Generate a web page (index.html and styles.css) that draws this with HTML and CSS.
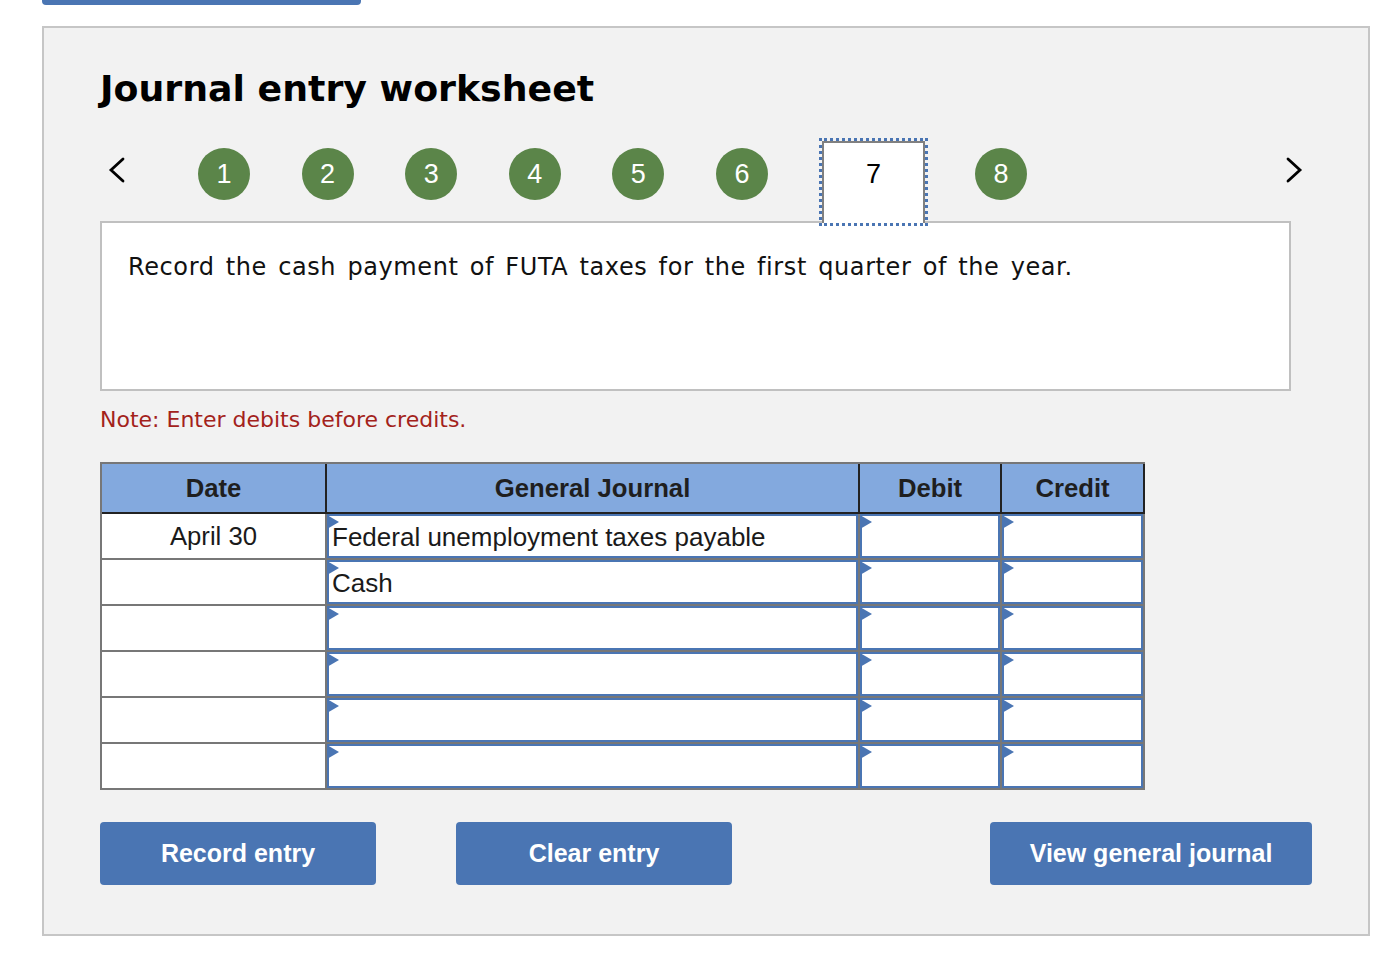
FILE: index.html
```html
<!DOCTYPE html>
<html lang="en">
<head>
    <meta charset="UTF-8">
    <meta name="viewport" content="width=device-width, initial-scale=1.0">
    <title>Journal entry worksheet</title>
    <link rel="stylesheet" href="styles.css">
</head>
<body>
    <!-- bottom of the previous button, cut off by the scroll -->
    <div class="topbar"></div>

    <div class="panel">
        <h1 class="title">Journal entry worksheet</h1>

        <!-- step navigation -->
        <div class="steps">
            <span class="arrow arrow-prev">
                <svg width="17" height="26" viewBox="0 0 17 26"><path d="M15 2 L3 13 L15 24" /></svg>
            </span>
            <span class="step step-first">1</span>
            <span class="step">2</span>
            <span class="step">3</span>
            <span class="step">4</span>
            <span class="step">5</span>
            <span class="step step-before">6</span>
            <span class="step-current">7</span>
            <span class="step step-last">8</span>
            <span class="arrow arrow-next">
                <svg width="17" height="26" viewBox="0 0 17 26"><path d="M2 2 L14 13 L2 24" /></svg>
            </span>
        </div>

        <div class="prompt">Record the cash payment of FUTA taxes for the first quarter of the year.</div>

        <p class="note">Note: Enter debits before credits.</p>

        <!-- journal table -->
        <div class="journal">
            <div class="head">Date</div>
            <div class="head">General Journal</div>
            <div class="head">Debit</div>
            <div class="head">Credit</div>

            <div class="cell date">April 30</div>
            <div class="cell"><div class="field">Federal unemployment taxes payable</div></div>
            <div class="cell"><div class="field"></div></div>
            <div class="cell"><div class="field"></div></div>

            <div class="cell date"></div>
            <div class="cell"><div class="field">Cash</div></div>
            <div class="cell"><div class="field"></div></div>
            <div class="cell"><div class="field"></div></div>

            <div class="cell date"></div>
            <div class="cell"><div class="field"></div></div>
            <div class="cell"><div class="field"></div></div>
            <div class="cell"><div class="field"></div></div>

            <div class="cell date"></div>
            <div class="cell"><div class="field"></div></div>
            <div class="cell"><div class="field"></div></div>
            <div class="cell"><div class="field"></div></div>

            <div class="cell date"></div>
            <div class="cell"><div class="field"></div></div>
            <div class="cell"><div class="field"></div></div>
            <div class="cell"><div class="field"></div></div>

            <div class="cell date"></div>
            <div class="cell"><div class="field"></div></div>
            <div class="cell"><div class="field"></div></div>
            <div class="cell"><div class="field"></div></div>
        </div>

        <div class="actions">
            <button class="btn btn-record">Record entry</button>
            <button class="btn btn-clear">Clear entry</button>
            <button class="btn btn-view">View general journal</button>
        </div>
    </div>
</body>
</html>
```

FILE: styles.css
```css
body {
    margin: 0;
    background-color: #ffffff;
    font-family: 'DejaVu Sans', Verdana, sans-serif;
    color: #111111;
}

.topbar {
    width: 319px;
    height: 5px;
    margin-left: 42px;
    background-color: #4a75b3;
    border-radius: 0 0 4px 4px;
}

.panel {
    box-sizing: border-box;
    width: 1328px;
    height: 910px;
    margin: 21px 0 0 42px;
    padding: 40px 0 0 56px;
    border: 2px solid #c6c6c6;
    background-color: #f2f2f2;
}

.title {
    margin: 0;
    font-family: 'DejaVu Sans', Verdana, sans-serif;
    font-size: 36.3px;
    font-weight: 700;
    line-height: 42px;
    color: #000000;
}

/* Navegacion de pasos */
.steps {
    display: flex;
    align-items: flex-start;
    width: 1203px;
    height: 82px;
    margin-top: 31px;
}

.arrow {
    display: block;
    width: 17px;
    height: 26px;
    margin-top: 16px;
}

.arrow svg {
    display: block;
    fill: none;
    stroke: #000000;
    stroke-width: 2.8;
    stroke-linecap: round;
    stroke-linejoin: miter;
}

.arrow-prev {
    margin-left: 8px;
}

.arrow-next {
    margin-left: auto;
}

.step {
    width: 52px;
    height: 52px;
    margin-top: 7px;
    margin-right: 51.6px;
    border-radius: 50%;
    background-color: #5b8549;
    color: #ffffff;
    font-family: 'Liberation Sans', Arial, sans-serif;
    font-size: 27px;
    line-height: 52px;
    text-align: center;
}

.step-first {
    margin-left: 73px;
}

.step-before {
    margin-right: 54px;
}

.step-last {
    margin-right: 0;
}

.step-current {
    position: relative;
    z-index: 1;
    box-sizing: border-box;
    width: 103px;
    height: 82px;
    margin-right: 50px;
    padding-top: 15px;
    border: 2px solid #808080;
    border-bottom: 0;
    outline: 3px dotted #4a75b3;
    background-color: #ffffff;
    color: #000000;
    font-family: 'Liberation Sans', Arial, sans-serif;
    font-size: 27px;
    line-height: 32px;
    text-align: center;
}

.prompt {
    box-sizing: border-box;
    width: 1191px;
    height: 170px;
    margin-top: -2px;
    padding: 29px 26px 0;
    border: 2px solid #c0c0c0;
    background-color: #ffffff;
    font-size: 24px;
    letter-spacing: 0.6px;
    word-spacing: 3px;
    line-height: 30px;
    color: #111111;
}

.note {
    margin: 16px 0 0;
    font-size: 22px;
    line-height: 26px;
    color: #a3221b;
}

/* Tabla del diario */
.journal {
    display: grid;
    grid-template-columns: 225px 533px 142px 143px;
    box-sizing: border-box;
    width: 1045px;
    margin-top: 29px;
    border-top: 2px solid #777777;
    border-left: 2px solid #777777;
    font-family: 'Liberation Sans', Arial, sans-serif;
    font-size: 25.7px;
    color: #1a1a1a;
}

.head {
    box-sizing: border-box;
    height: 50px;
    border-right: 2px solid #222222;
    border-bottom: 2px solid #222222;
    background-color: #83a9de;
    font-weight: 700;
    line-height: 48px;
    text-align: center;
    color: #1f1f1f;
}

.cell {
    box-sizing: border-box;
    height: 46px;
    border-right: 2px solid #777777;
    border-bottom: 2px solid #777777;
    background-color: #ffffff;
}

.date {
    line-height: 44px;
    text-align: center;
}

.field {
    position: relative;
    box-sizing: border-box;
    height: 100%;
    padding-left: 3px;
    border: 2px solid #4a75b3;
    font-size: 26px;
    line-height: 42px;
    white-space: nowrap;
}

/* Marcador triangular del campo */
.field::before {
    content: "";
    position: absolute;
    left: -2px;
    top: -1px;
    border-left: 12px solid #4a75b3;
    border-top: 7px solid transparent;
    border-bottom: 7px solid transparent;
}

.actions {
    display: flex;
    width: 1212px;
    margin-top: 32px;
}

.btn {
    height: 63px;
    padding: 0;
    border: 0;
    border-radius: 4px;
    background-color: #4a75b3;
    color: #ffffff;
    font-family: 'Liberation Sans', Arial, sans-serif;
    font-size: 25px;
    font-weight: 700;
}

.btn-record,
.btn-clear {
    width: 276px;
}

.btn-clear {
    margin-left: 80px;
}

.btn-view {
    width: 322px;
    margin-left: auto;
}
```
